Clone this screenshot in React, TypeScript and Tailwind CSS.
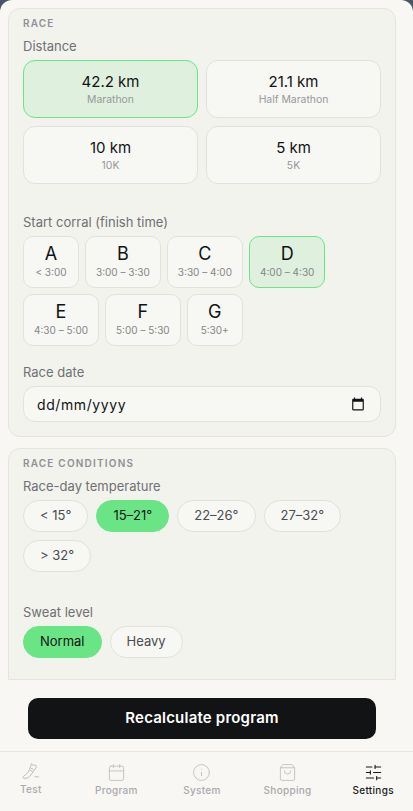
import { Calendar, Info, ShoppingBag, SlidersHorizontal } from "lucide-react";

const distances = [
  { km: "42.2 km", label: "Marathon", active: true },
  { km: "21.1 km", label: "Half Marathon" },
  { km: "10 km", label: "10K" },
  { km: "5 km", label: "5K" },
];

const corrals = [
  { id: "A", time: "< 3:00" },
  { id: "B", time: "3:00 – 3:30" },
  { id: "C", time: "3:30 – 4:00" },
  { id: "D", time: "4:00 – 4:30", active: true },
  { id: "E", time: "4:30 – 5:00" },
  { id: "F", time: "5:00 – 5:30" },
  { id: "G", time: "5:30+" },
];

const temps = [
  { label: "< 15°" },
  { label: "15–21°", active: true },
  { label: "22–26°" },
  { label: "27–32°" },
  { label: "> 32°" },
];

function Pill({ label, active }: { label: string; active?: boolean }) {
  return (
    <button
      className={
        active
          ? "h-8 rounded-full border border-[#6ae585] bg-[#6ae585] px-[16px] text-[13px] text-[#111315]"
          : "h-8 rounded-full border border-[#e2e2dd] bg-[#f7f7f3] px-[16px] text-[13px] text-[#4b4d52]"
      }
    >
      {label}
    </button>
  );
}

function Shoe() {
  return (
    <svg width="18" height="18" viewBox="0 0 18 18" fill="none" stroke="#bdbdbc" strokeWidth="1" strokeLinecap="round" strokeLinejoin="round">
      <path d="M9.500 1.200c1 .9 2.500 1.300 4.200.9 1 .5.900 1.800.100 2.900L9 11.800c-1 1.400-2.300 3-4.100 3.400H1.500c-.6-.8-.3-1.700.4-2.300C4 11.200 6 9.800 7 7.700c.7-1.500 1.300-4.300 2.500-6.500z" />
      <path d="M9.300 5.300l1.800 1M8.300 7.300l1.800 1M13 13.800h3.500" />
    </svg>
  );
}

function DateIcon() {
  return (
    <svg width="14" height="14" viewBox="0 0 24 24" fill="#111315">
      <path d="M20 3h-1V1h-2v2H7V1H5v2H4c-1.100 0-2 .9-2 2v16c0 1.100.9 2 2 2h16c1.100 0 2-.9 2-2V5c0-1.100-.9-2-2-2zm0 18H4V8h16v13z" />
    </svg>
  );
}

export default function App() {
  return (
    <div className="flex h-[811px] w-[413px] flex-col overflow-hidden bg-[#4b5568] font-['Inter',sans-serif]">
      <div className="flex h-full flex-col overflow-hidden rounded-t-[12px] bg-[#f8f7f3]">
        <div className="h-[680px] shrink-0 overflow-hidden pl-2 pr-[17px] pt-2">
          <section className="rounded-xl border border-[#e4e4de] bg-[#f3f3ed] px-[14px] pb-[14px] pt-[7px]">
            <h2 className="text-[10px] font-semibold uppercase leading-[14px] tracking-[1.2px] text-[#8f9094]">Race</h2>
            <p className="mt-[8px] text-[13px] leading-[16px] text-[#6f7074]">Distance</p>
            <div className="mt-[6px] grid grid-cols-2 gap-2">
              {distances.map((d) => (
                <button
                  key={d.km}
                  className={
                    d.active
                      ? "flex h-[58px] flex-col items-center justify-center gap-[2px] rounded-xl border border-[#6ae585] bg-[#dff0de] pt-[1px]"
                      : "flex h-[58px] flex-col items-center justify-center gap-[2px] rounded-xl border border-[#e2e2dd] bg-[#f7f7f3] pt-[1px]"
                  }
                >
                  <span className="text-[15px] leading-[18px] text-[#111315]">{d.km}</span>
                  <span className="text-[10.4px] leading-[14px] text-[#97989c]">{d.label}</span>
                </button>
              ))}
            </div>
            <p className="mt-[30px] text-[13px] leading-[16px] text-[#6f7074]">Start corral (finish time)</p>
            <div className="mt-[6px] flex flex-wrap gap-[6px]">
              {corrals.map((c) => (
                <button
                  key={c.id}
                  className={
                    c.active
                      ? "flex h-[52px] min-w-[56px] flex-col items-center justify-center rounded-[10px] border border-[#6ae585] bg-[#dff0de] px-[10px] pb-[2px]"
                      : "flex h-[52px] min-w-[56px] flex-col items-center justify-center rounded-[10px] border border-[#e2e2dd] bg-[#f7f7f3] px-[10px] pb-[2px]"
                  }
                >
                  <span className="text-[18px] leading-[22px] text-[#111315]">{c.id}</span>
                  <span className="text-[10px] leading-[14px] text-[#85868a]">{c.time}</span>
                </button>
              ))}
            </div>
            <p className="mt-[18px] text-[13px] leading-[16px] text-[#6f7074]">Race date</p>
            <div className="mt-[6px] flex h-[36px] items-center justify-between rounded-xl border border-[#e2e2dd] bg-[#f7f7f3] pl-[13px] pr-[15px]">
              <span className="text-[14px] tracking-[0.6px] text-[#111315]">dd/mm/yyyy</span>
              <DateIcon />
            </div>
          </section>
          <section className="mt-[11px] rounded-t-xl border border-[#e4e4de] bg-[#f3f3ed] px-[14px] pb-[21px] pt-[7px]">
            <h2 className="text-[10px] font-semibold uppercase leading-[14px] tracking-[1.2px] text-[#8f9094]">Race conditions</h2>
            <p className="mt-[8px] text-[13px] leading-[16px] text-[#6f7074]">Race-day temperature</p>
            <div className="mt-[6px] flex flex-wrap gap-2">
              {temps.map((t) => (
                <Pill key={t.label} label={t.label} active={t.active} />
              ))}
            </div>
            <p className="mt-[32px] text-[13px] leading-[16px] text-[#6f7074]">Sweat level</p>
            <div className="mt-[6px] flex gap-2">
              <Pill label="Normal" active />
              <Pill label="Heavy" />
            </div>
          </section>
        </div>
        <div className="flex flex-1 items-start pl-[28px] pt-[18px]">
          <button className="h-[41px] w-[348px] rounded-[10px] bg-[#111315] text-[15px] font-semibold tracking-[0.2px] text-white">
            Recalculate program
          </button>
        </div>
        <nav className="-ml-3 grid h-[60px] w-[428px] shrink-0 grid-cols-5 border-t border-[#e6e5e0] pt-[11px]">
          {[
            { label: "Test", icon: <Shoe /> },
            { label: "Program", icon: <Calendar size={19} strokeWidth={1.1} className="text-[#bdbdbc]" /> },
            { label: "System", icon: <Info size={19} strokeWidth={1.1} className="text-[#bdbdbc]" /> },
            { label: "Shopping", icon: <ShoppingBag size={19} strokeWidth={1.1} className="text-[#bdbdbc]" /> },
            { label: "Settings", icon: <SlidersHorizontal size={19} strokeWidth={1.4} />, active: true },
          ].map((t) => (
            <div
              key={t.label}
              className={
                t.active
                  ? "flex flex-col items-center gap-[1px] text-[#1a1b1e]"
                  : "flex flex-col items-center gap-[1px] text-[#a9aaad]"
              }
            >
              {t.icon}
              <span className="text-[10px] font-medium leading-[14px] tracking-[0.3px]">{t.label}</span>
            </div>
          ))}
        </nav>
      </div>
    </div>
  );
}
